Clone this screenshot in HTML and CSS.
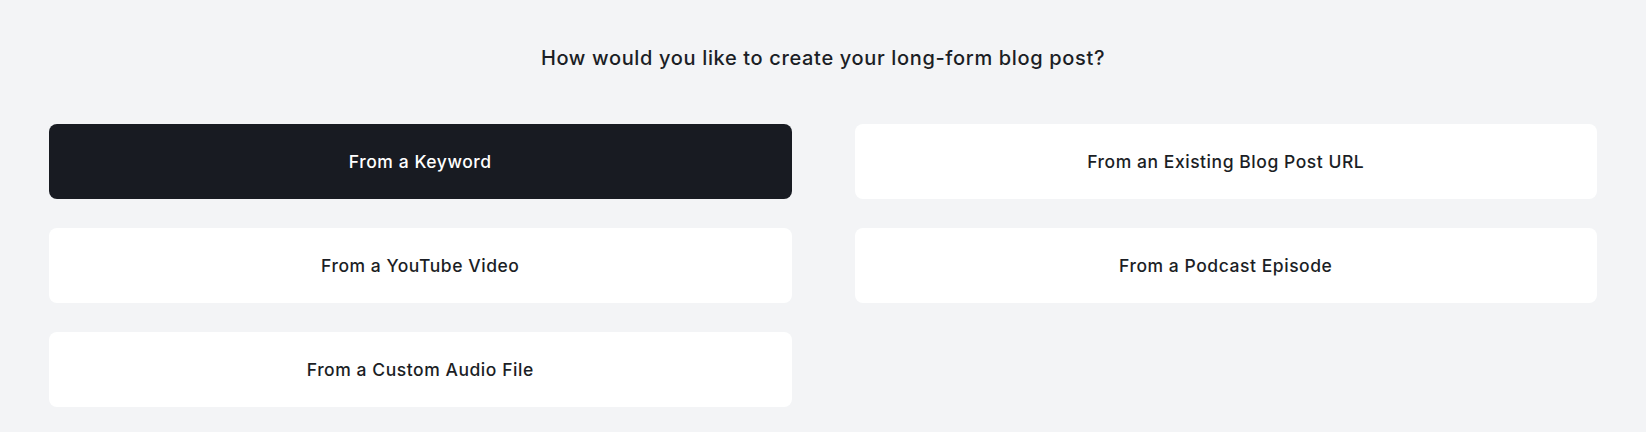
FILE: index.html
```html
<!DOCTYPE html>
<html lang="en">
<head>
<meta charset="utf-8">
<title>Create blog post</title>
<link rel="stylesheet" href="styles.css">
</head>
<body>
<main class="page">
  <h1 class="title">How would you like to create your long-form blog post?</h1>
  <div class="options">
    <button class="option option--active">From a Keyword</button>
    <button class="option">From an Existing Blog Post URL</button>
    <button class="option">From a YouTube Video</button>
    <button class="option">From a Podcast Episode</button>
    <button class="option">From a Custom Audio File</button>
  </div>
</main>
</body>
</html>
```

FILE: styles.css
```css
html, body {
  margin: 0;
  padding: 0;
  background: #f3f4f6;
}

body {
  font-family: Inter, "Noto Sans", "Liberation Sans", sans-serif;
  color: #1b1e25;
}

.page {
  padding: 44px 49px 0;
}

.title {
  margin: 0;
  text-align: center;
  font-size: 20px;
  line-height: 28px;
  font-weight: 500;
  letter-spacing: 0.65px;
  color: #1b1e25;
}

.options {
  margin-top: 52px;
  display: grid;
  grid-template-columns: 1fr 1fr;
  column-gap: 63px;
  row-gap: 29px;
}

.option {
  height: 75px;
  border: none;
  border-radius: 8px;
  background: #ffffff;
  color: #1b1e25;
  font-family: inherit;
  font-size: 17.5px;
  font-weight: 500;
  letter-spacing: 0.55px;
  padding: 0;
  cursor: pointer;
}

.option--active {
  background: #181b22;
  color: #ffffff;
}
```
